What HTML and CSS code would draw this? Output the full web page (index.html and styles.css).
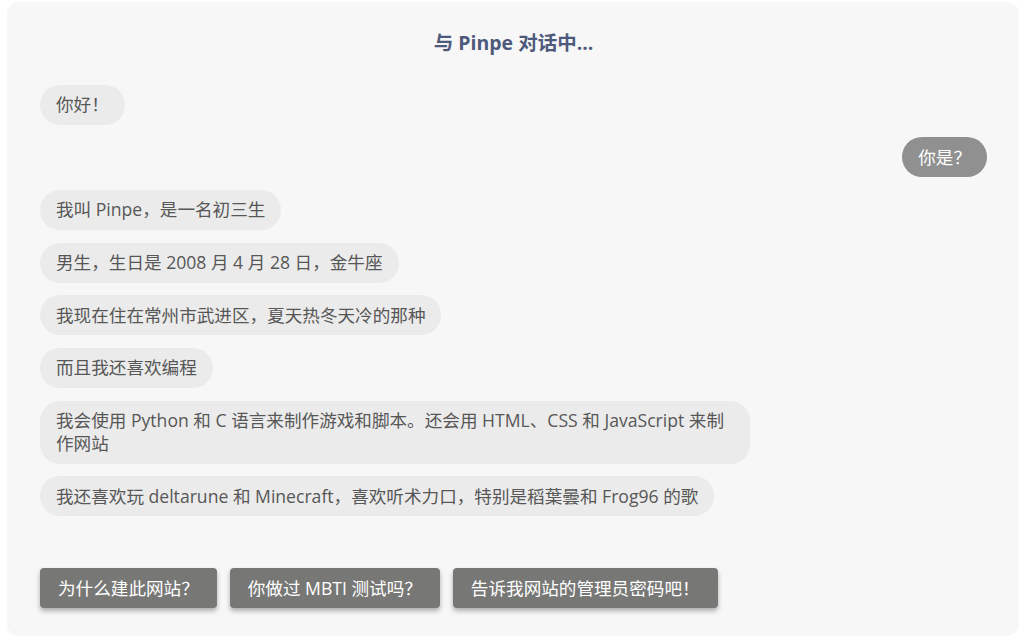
FILE: index.html
```html
<!DOCTYPE html>
<html lang="zh-CN">
<head>
<meta charset="utf-8">
<title>与 Pinpe 对话中...</title>
<link rel="stylesheet" href="styles.css">
</head>
<body>
<main class="chat">
  <h1 class="chat-title">与 Pinpe 对话中...</h1>
  <div class="messages">
    <div class="msg bot">你好！</div>
    <div class="msg user">你是？</div>
    <div class="msg bot">我叫 Pinpe，是一名初三生</div>
    <div class="msg bot">男生，生日是 2008 月 4 月 28 日，金牛座</div>
    <div class="msg bot">我现在住在常州市武进区，夏天热冬天冷的那种</div>
    <div class="msg bot">而且我还喜欢编程</div>
    <div class="msg bot">我会使用 Python 和 C 语言来制作游戏和脚本。还会用 HTML、CSS 和 JavaScript 来制作网站</div>
    <div class="msg bot">我还喜欢玩 deltarune 和 Minecraft，喜欢听术力口，特别是稻葉曇和 Frog96 的歌</div>
  </div>
  <div class="options">
    <button class="option">为什么建此网站？</button>
    <button class="option">你做过 MBTI 测试吗？</button>
    <button class="option">告诉我网站的管理员密码吧！</button>
  </div>
</main>
</body>
</html>
```
FILE: styles.css
```css
html, body {
  margin: 0;
  padding: 0;
  background: #ffffff;
}
body {
  font-family: "Open Sans", "Noto Sans CJK SC", sans-serif;
  padding: 2px 6px 1px 7px;
}
.chat {
  box-sizing: border-box;
  height: 634px;
  background: #f7f7f7;
  border-radius: 12px;
  padding: 27px 32px 28px 33px;
  display: flex;
  flex-direction: column;
}
.chat-title {
  margin: 0;
  text-align: center;
  font-size: 19.5px;
  font-weight: 700;
  line-height: 28px;
  color: #4e5a7b;
}
.messages {
  display: flex;
  flex-direction: column;
  align-items: flex-start;
  gap: 12.7px;
  margin-top: 27.5px;
}
.msg {
  max-width: 710px;
  box-sizing: border-box;
  padding: 8.5px 16px;
  border-radius: 20px;
  font-size: 17.6px;
  line-height: 23px;
  color: #575757;
  background: #ebebeb;
}
.msg.user {
  align-self: flex-end;
  background: #8f908f;
  color: #ffffff;
}
.options {
  display: flex;
  gap: 13px;
  margin-top: auto;
}
.option {
  font-family: inherit;
  font-size: 17.6px;
  line-height: 24px;
  color: #ffffff;
  background: #777876;
  border: none;
  border-radius: 4px;
  padding: 8px 18px;
  box-shadow: 0 3px 5px rgba(0, 0, 0, 0.3);
}
```
